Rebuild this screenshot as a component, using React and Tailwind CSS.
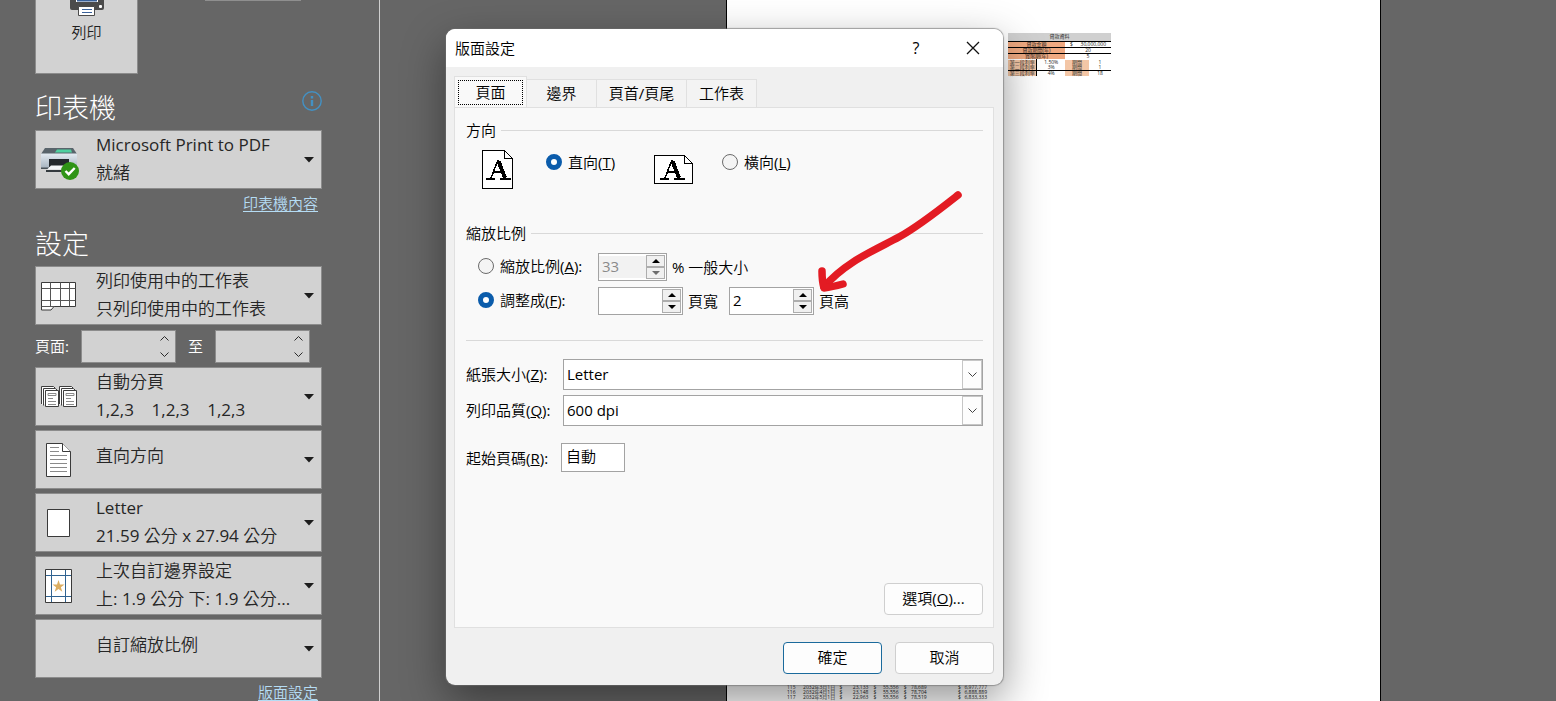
import React from "react";

const FONT =
  "font-['Open_Sans','Noto_Sans_CJK_TC_DemiLight','Noto_Sans_CJK_TC',sans-serif]";

function SheetIcon() {
  return (
    <svg width="36" height="30" viewBox="0 0 36 30" fill="#fff" stroke="#3a3a3a">
      <path d="M.5 1.5h34v24H13l-3 3.5H.5z" />
      <path d="M9.5 1.5v24M19.5 1.5v24M28.5 1.5v24M.5 7.5h34M.5 19.5h34M.5 25.5h13" fill="none" stroke="#555" />
    </svg>
  );
}

function CollateIcon() {
  const stack = (x) => (
    <g transform={`translate(${x} 0)`}>
      <path d="M.5 18.5V.5h12l2 2v2h-10v14z" fill="#fff" stroke="none" />
      <path d="M.5 18V.5h12l1.500 1.500M2.500 19.500V2.500h12l1.500 1.500" fill="none" />
      <path d="M4.500 4.500h13v16h-13z" fill="#fff" />
      <path d="M7 7.500h8v2H7zM7 12.500h5M7 15.500h8M7 18.500h8" fill="none" stroke="#8a8a8a" />
    </g>
  );
  return (
    <svg width="37" height="22" viewBox="0 0 37 22" stroke="#3f3f3f">
      {stack(0)}
      {stack(18)}
    </svg>
  );
}

function PortraitIcon() {
  return (
    <svg width="26" height="34" viewBox="0 0 26 34" fill="#fff" stroke="#3a3a3a">
      <path d="M.5.5h16l8 8v25H.5z" />
      <path d="M16.500.5v8h8" />
      <path d="M4 4.500h9M4 8.500h9M4 12.500h17M4 16.500h17M4 20.500h17M4 24.500h17M4 28.500h17" stroke="#8a8a8a" fill="none" />
    </svg>
  );
}

function PaperIcon() {
  return (
    <svg width="24" height="28" viewBox="0 0 24 28">
      <path d="M.5.5h22v27H.5z" fill="#fff" stroke="#3a3a3a" />
    </svg>
  );
}

function MarginsIcon() {
  return (
    <svg width="28" height="34" viewBox="0 0 28 34">
      <path d="M.5.5h26v33H.5z" fill="#fff" stroke="#3a3a3a" />
      <path d="M6.500 1v32M20.500 1v32M1 6.500h25M1 27.500h25" stroke="#2f6291" fill="none" />
      <path d="M13.500 11l1.500 4.500h4.500l-3.600 2.700 1.400 4.500-3.800-2.800-3.800 2.800 1.400-4.500-3.600-2.700H12z" fill="#dcae62" />
    </svg>
  );
}

function PrinterStatusIcon() {
  return (
    <svg width="38" height="40" viewBox="0 -7 38 40" className="overflow-visible">
      <defs>
        <linearGradient id="body" x1="0" y1="0" x2="0" y2="1">
          <stop offset="0" stopColor="#e3ebf2" />
          <stop offset="1" stopColor="#a3b0bc" />
        </linearGradient>
      </defs>
      <path d="M5 1h28l4 6H1z" fill="#59646b" />
      <path d="M17 2.500h14l1 3H15z" fill="#4fd0a0" />
      <path d="M1 6.500h36v14q0 1.500-1.500 1.500H1z" fill="url(#body)" />
      <path d="M1 20.500h8V22H1z" fill="#4a5359" />
      <path d="M9 12h20v8H9z" fill="#23282c" />
      <path d="M11 18.500h16l-1 4H7z" fill="#f4f6f8" />
      <path d="M6 23h18v2H6z" fill="#343a3f" />
      <circle cx="30" cy="24" r="9" fill="#2f9416" />
      <path d="M25.500 24l3.200 3.200 6-6.200" fill="none" stroke="#fff" strokeWidth="2.400" />
    </svg>
  );
}

function PrinterIcon() {
  return (
    <svg width="36" height="16" viewBox="0 0 36 16">
      <path d="M1 0h34v8q0 2-2 2H3q-2 0-2-2z" fill="#4b4b4b" />
      <path d="M7 0h22v2H7z" fill="#fff" />
      <path d="M8 0h20v1.500H8z" fill="#39619a" />
      <rect x="30" y="5" width="3" height="3" rx="1" fill="#fff" />
      <path d="M9.500 6.500h16v9h-16z" fill="#fff" stroke="#4b4b4b" />
      <path d="M13 9.500h10M13 12.500h10" stroke="#39619a" />
    </svg>
  );
}

function SettingButton({ icon, title, detail }) {
  return (
    <button
      type="button"
      className="flex h-[59px] w-full items-center border border-[#8c8c8c] bg-[#d2d2d2] pr-[7px] text-left text-[17px] text-[#262626]"
    >
      <span className="flex w-[60px] shrink-0 justify-start">
        <span className="flex w-[46px] items-center justify-center">{icon}</span>
      </span>
      <span className={detail ? "min-w-0 flex-1 pb-px leading-7" : "min-w-0 flex-1 pb-2 leading-7"}>
        <span className="block truncate whitespace-pre">{title}</span>
        {detail && <span className="block truncate whitespace-pre">{detail}</span>}
      </span>
      <svg width="10" height="6" viewBox="0 0 10 6" className="shrink-0">
        <path d="M0 0h10L5 5.500z" fill="#1c1c1c" />
      </svg>
    </button>
  );
}

function PageField({ id, label }) {
  return (
    <span className="flex h-[33px] w-[95px] items-center border border-[#8c8c8c] bg-[#d2d2d2] pr-[6px]">
      <input id={id} aria-label={label} className="h-full w-full min-w-0 bg-transparent px-1 outline-none" />
      <svg width="9" height="22" viewBox="0 0 9 22" fill="none" stroke="#2b2b2b" className="shrink-0">
        <path d="M.5 4.500l4-4 4 4M.5 16.500l4 4 4-4" />
      </svg>
    </span>
  );
}

function Sidebar() {
  return (
    <aside className="flex w-[380px] shrink-0 flex-col border-r border-[#cfcfcf] pl-[35px]">
      <div className="flex items-start gap-[67px]">
        <button
          type="button"
          className="flex h-[74px] w-[103px] flex-col items-center gap-[6px] border border-t-0 border-[#8c8c8c] bg-[#d2d2d2] text-[15px] leading-5 text-[#1e1e1e]"
        >
          <PrinterIcon />
          列印
        </button>
        <span className="h-px w-24 bg-[#8f8f8f]" />
      </div>
      <div className="flex w-[287px] flex-col">
        <div className="mt-[13px] flex h-10 items-center justify-between">
          <h2 className="font-['Noto_Sans_CJK_TC',sans-serif] text-[27px] font-light leading-10 text-white">印表機</h2>
          <button type="button" aria-label="印表機資訊" className="mb-3">
            <svg width="20" height="20" viewBox="0 0 20 20" className="block">
              <circle cx="10" cy="10" r="9.200" fill="none" stroke="#4391c4" strokeWidth="1.400" />
              <path d="M10 5v2.500M10 9v6" stroke="#4391c4" strokeWidth="2.400" />
            </svg>
          </button>
        </div>
        <div className="mt-[3px]">
          <SettingButton icon={<PrinterStatusIcon />} title="Microsoft Print to PDF" detail="就緒" />
        </div>
        <a href="#printer" className="mt-[2px] self-end pr-1 text-[15px] leading-6 text-[#b5dcf4] underline underline-offset-2">
          印表機內容
        </a>
        <h2 className="mt-2 font-['Noto_Sans_CJK_TC',sans-serif] text-[27px] font-light leading-10 text-white">設定</h2>
        <div className="mt-[3px] flex flex-col gap-1">
          <SettingButton icon={<SheetIcon />} title="列印使用中的工作表" detail="只列印使用中的工作表" />
          <div className="flex items-center pt-px text-[15px] text-white">
            <label htmlFor="from" className="w-[46px]">頁面:</label>
            <PageField id="from" label="頁面" />
            <label htmlFor="to" className="w-[39px] text-center">至</label>
            <PageField id="to" label="至" />
          </div>
          <SettingButton icon={<CollateIcon />} title="自動分頁" detail="1,2,3    1,2,3    1,2,3" />
          <SettingButton icon={<PortraitIcon />} title="直向方向" />
          <SettingButton icon={<PaperIcon />} title="Letter" detail="21.59 公分 x 27.94 公分" />
          <SettingButton icon={<MarginsIcon />} title="上次自訂邊界設定" detail="上: 1.9 公分 下: 1.9 公分..." />
          <SettingButton icon={null} title="自訂縮放比例" />
        </div>
        <a href="#setup" className="mt-[2px] self-end pr-1 text-[15px] leading-6 text-[#b5dcf4] underline underline-offset-2">
          版面設定
        </a>
      </div>
    </aside>
  );
}

function LoanTable() {
  const orange = "bg-[#efa981]";
  const peach = "bg-[#f3c6a6]";
  const top = [
    ["貸款金額", "$      30,000,000"],
    ["貸款期間(年)", "20"],
    ["寬限期(年)", "5"],
  ];
  const rates = [
    ["第一段利率", "1.50%", "1"],
    ["第二段利率", "3%", "1"],
    ["第三段利率", "4%", "18"],
  ];
  return (
    <table className="ml-auto w-[103px] table-fixed border-collapse whitespace-pre text-center text-[5px] leading-[5px] text-[#1a1a1a]">
      <colgroup>
        <col className="w-[29px]" />
        <col className="w-[28px]" />
        <col className="w-[24px]" />
        <col className="w-[22px]" />
      </colgroup>
      <tbody>
        <tr>
          <th colSpan={4} className="h-2 border-b border-black bg-[#d0d0d0] p-0 font-normal">貸款資料</th>
        </tr>
        {top.map(([k, v], i) => (
          <tr key={k} className={i < 2 ? "border-b border-black" : "border-b border-white"}>
            <td colSpan={2} className={`p-0 ${orange}`}>{k}</td>
            <td colSpan={2} className="p-0">{v}</td>
          </tr>
        ))}
        {rates.map(([k, v, n]) => (
          <tr key={k} className="last:border-t last:border-black">
            <td className={`border-r border-black p-0 ${peach}`}>{k}</td>
            <td className="p-0">{v}</td>
            <td className={`p-0 ${peach}`}>期間</td>
            <td className="p-0">{n}</td>
          </tr>
        ))}
      </tbody>
    </table>
  );
}

function ScheduleTable() {
  const rows = [
    ["115", "2032年3月1日", "23,133", "55,556", "78,689", "6,977,777"],
    ["116", "2032年4月1日", "23,148", "55,556", "78,704", "6,888,889"],
    ["117", "2032年5月1日", "22,963", "55,556", "78,519", "6,833,333"],
  ];
  return (
    <table className="ml-[60px] w-[200px] table-fixed border-collapse whitespace-nowrap text-[5px] leading-[5px] text-[#1d1d1d]">
      <colgroup>
        <col className="w-[16px]" />
        <col className="w-[31px]" />
        <col className="w-[8px]" />
        <col className="w-[26px]" />
        <col className="w-[8px]" />
        <col className="w-[22px]" />
        <col className="w-[8px]" />
        <col className="w-[20px]" />
        <col className="w-[34px]" />
        <col className="w-[26px]" />
      </colgroup>
      <tbody>
        {rows.map((r) => (
          <tr key={r[0]}>
            <td className="p-0">{r[0]}</td>
            <td className="p-0">{r[1]}</td>
            <td className="p-0 text-right">$</td>
            <td className="p-0 text-right">{r[2]}</td>
            <td className="p-0 text-right">$</td>
            <td className="p-0 text-right">{r[3]}</td>
            <td className="p-0 text-right">$</td>
            <td className="p-0 text-right">{r[4]}</td>
            <td className="p-0 text-right">$</td>
            <td className="p-0 text-right">{r[5]}</td>
          </tr>
        ))}
      </tbody>
    </table>
  );
}

function Preview() {
  return (
    <main className="flex min-w-0 flex-1 justify-end pr-[175px]">
      <div className="flex h-full w-[655px] flex-col justify-between border-x border-black bg-white pb-px pt-[33px]">
        <div className="pr-[269px]">
          <LoanTable />
        </div>
        <ScheduleTable />
      </div>
    </main>
  );
}

function Radio({ id, name, checked, children }) {
  return (
    <span className="flex h-6 items-center gap-[6px]">
      <input
        id={id}
        type="radio"
        name={name}
        defaultChecked={checked}
        className="size-4 shrink-0 appearance-none rounded-full border border-[#6b6b6b] bg-[#f4f4f4] checked:border-[5px] checked:border-[#0b5cab] checked:bg-white"
      />
      <label htmlFor={id} className="whitespace-nowrap">{children}</label>
    </span>
  );
}

function SpinArrow({ up, disabled }) {
  return (
    <button
      type="button"
      aria-label={up ? "增加" : "減少"}
      className="flex h-3 w-[19px] items-center justify-center border border-[#adadad] bg-[#f0f0f0]"
    >
      <svg width="8" height="4" viewBox="0 0 8 4">
        <path d={up ? "M0 4L4 0l4 4z" : "M0 0h8L4 4z"} fill={disabled ? "#6d6d6d" : "#000"} />
      </svg>
    </button>
  );
}

function Spinner({ id, label, value, width, muted }) {
  return (
    <span className={`flex h-7 shrink-0 items-center border border-[#a3a3a3] bg-white pr-px ${width}`}>
      <input
        id={id}
        aria-label={label}
        defaultValue={value}
        readOnly={muted}
        className={`h-[22px] w-full min-w-0 px-[3px] pb-[3px] outline-none ${muted ? "bg-[#f2f2f2] text-[#8a8a8a]" : "bg-white"}`}
      />
      <span className="flex shrink-0 flex-col">
        <SpinArrow up />
        <SpinArrow disabled={muted} />
      </span>
    </span>
  );
}

function Combo({ id, label, value }) {
  return (
    <div className="flex items-center">
      <label htmlFor={id} className="w-[97px] shrink-0 pb-[2px]">{label}</label>
      <div className="relative flex-1">
        <select id={id} className="block h-[31px] w-full appearance-none border border-[#a3a3a3] bg-white pb-[2px] pl-[3px] outline-none">
          <option>{value}</option>
        </select>
        <span className="pointer-events-none absolute inset-y-px right-px flex w-5 items-center justify-center border border-[#c6c6c6] bg-[#fdfdfd]">
          <svg width="9" height="6" viewBox="0 0 9 6" fill="none" stroke="#444">
            <path d="M.5.5l4 4 4-4" />
          </svg>
        </span>
      </div>
    </div>
  );
}

function GroupTitle({ children }) {
  return (
    <div className="flex h-5 items-center gap-[5px]">
      <h3>{children}</h3>
      <hr className="flex-1 border-[#d9d9d9]" />
    </div>
  );
}

function PageWithLetter({ landscape }) {
  const w = landscape ? 39 : 31;
  const h = landscape ? 29 : 39;
  return (
    <svg width={w} height={h} viewBox={`0 0 ${w} ${h}`} shapeRendering="crispEdges" className="shrink-0">
      <path d={`M.5.5h${w - 9}l8 8v${h - 9}H.5z`} fill="#fff" stroke="#000" />
      <path d={`M${w - 8.5} .5v8h8`} fill="none" stroke="#000" />
      <g transform={landscape ? "translate(6 4)" : "translate(4 9)"} fill="none" stroke="#000">
        <path d="M12 1L5 19M7 13h9" strokeWidth="1.500" />
        <path d="M12.500 2L19 19" strokeWidth="4" />
        <path d="M0 19.500h9M14 19.500h11" strokeWidth="2" />
      </g>
    </svg>
  );
}

const DIALOG_BUTTON =
  "h-8 w-[99px] rounded-[4px] border bg-[#fdfdfd] pb-[2px] text-center leading-6";

function Dialog() {
  const tabs = [
    ["邊界", "w-[70px]"],
    ["頁首/頁尾", "w-[90px]"],
    ["工作表", "w-[70px]"],
  ];
  return (
    <section
      role="dialog"
      aria-label="版面設定"
      className="absolute left-[446px] top-[29px] w-[557px] overflow-hidden rounded-[9px] bg-[#f0f0f0] text-[15px] leading-5 text-black shadow-[0_0_1px_1px_rgba(110,110,110,0.6),0_16px_44px_rgba(0,0,0,0.42)]"
    >
      <header className="flex h-[38px] items-center bg-white pl-[9px] pr-[23px]">
        <h1 className="flex-1 pb-px">版面設定</h1>
        <button type="button" aria-label="說明" className="w-4 text-center text-[16px]">?</button>
        <button type="button" aria-label="關閉" className="ml-[42px]">
          <svg width="14" height="14" viewBox="0 0 14 14" className="block" stroke="#111" strokeWidth="1.300">
            <path d="M1 1l12 12M13 1L1 13" />
          </svg>
        </button>
      </header>
      <div className="pb-[11px] pl-2 pr-[9px] pt-[9px]">
        <div role="tablist" className="flex items-end">
          <button
            type="button"
            role="tab"
            aria-selected="true"
            className="h-[31px] w-[73px] border border-b-0 border-[#e0e0e0] bg-[#f9f9f9] p-[3px]"
          >
            <span className="flex h-[25px] items-center justify-center border border-dotted border-black pb-[2px]">頁面</span>
          </button>
          {tabs.map(([name, width]) => (
            <button
              key={name}
              type="button"
              role="tab"
              className={`h-[28px] border border-b-0 border-l-0 border-[#e0e0e0] bg-[#f3f3f3] pb-[2px] ${width}`}
            >
              {name}
            </button>
          ))}
        </div>
        <div role="tabpanel" className="flex min-h-[521px] flex-col border border-[#e0e0e0] bg-[#f9f9f9] py-3 pl-[11px] pr-[10px]">
          <GroupTitle>方向</GroupTitle>
          <div className="mt-[10px] grid grid-cols-[64px_108px_68px_1fr] pl-4">
            <PageWithLetter />
            <Radio id="portrait" name="orientation" checked>直向(<u>T</u>)</Radio>
            <span className="self-center"><PageWithLetter landscape /></span>
            <Radio id="landscape" name="orientation">橫向(<u>L</u>)</Radio>
          </div>
          <div className="mt-[34px]">
            <GroupTitle>縮放比例</GroupTitle>
          </div>
          <div className="mt-[10px] flex flex-col gap-[6px] pl-3">
            <div className="flex items-center gap-[5px]">
              <div className="w-[115px] pb-[2px]">
                <Radio id="adjust" name="scaling">縮放比例(<u>A</u>):</Radio>
              </div>
              <Spinner id="percent" label="縮放比例" value="33" width="w-[69px]" muted />
              <label htmlFor="percent">% 一般大小</label>
            </div>
            <div className="flex items-center gap-[5px]">
              <div className="w-[115px] pb-[2px]">
                <Radio id="fit" name="scaling" checked>調整成(<u>F</u>):</Radio>
              </div>
              <Spinner id="wide" label="頁寬" value="" width="w-[85px]" />
              <label htmlFor="wide" className="w-9">頁寬</label>
              <Spinner id="tall" label="頁高" value="2" width="w-[85px]" />
              <label htmlFor="tall">頁高</label>
            </div>
          </div>
          <hr className="mt-[25px] border-[#d9d9d9]" />
          <div className="mt-[18px] flex flex-col gap-[5px]">
            <Combo id="paper" label={<>紙張大小(<u>Z</u>):</>} value="Letter" />
            <Combo id="quality" label={<>列印品質(<u>Q</u>):</>} value="600 dpi" />
          </div>
          <div className="mt-[17px] flex items-center">
            <label htmlFor="first" className="w-[95px]">起始頁碼(<u>R</u>):</label>
            <input
              id="first"
              defaultValue="自動"
              className="h-[29px] w-16 border border-[#a3a3a3] bg-white px-1 pb-[5px] outline-none"
            />
          </div>
          <button type="button" className={`mt-auto self-end border-[#cfcfcf] ${DIALOG_BUTTON}`}>
            選項(<u>O</u>)...
          </button>
        </div>
        <div className="mt-[14px] flex justify-end gap-[13px]">
          <button type="button" className={`border-[#1a6a9c] ${DIALOG_BUTTON}`}>確定</button>
          <button type="button" className={`border-[#cfcfcf] ${DIALOG_BUTTON}`}>取消</button>
        </div>
      </div>
    </section>
  );
}

function HandDrawnArrow() {
  return (
    <svg
      width="150"
      height="110"
      viewBox="0 0 150 110"
      className="pointer-events-none absolute left-[815px] top-[188px]"
      fill="none"
      stroke="#e31b23"
      strokeWidth="7.500"
      strokeLinecap="round"
      strokeLinejoin="round"
    >
      <path d="M143 7C124 22 104 38 84 49 60 62 30 74 9 99" />
      <path d="M7 83q0 10 2 17 8-1 19-4" />
    </svg>
  );
}

export default function App() {
  return (
    <div className={`relative flex h-screen overflow-hidden bg-[#666666] ${FONT}`}>
      <Sidebar />
      <Preview />
      <Dialog />
      <HandDrawnArrow />
    </div>
  );
}
